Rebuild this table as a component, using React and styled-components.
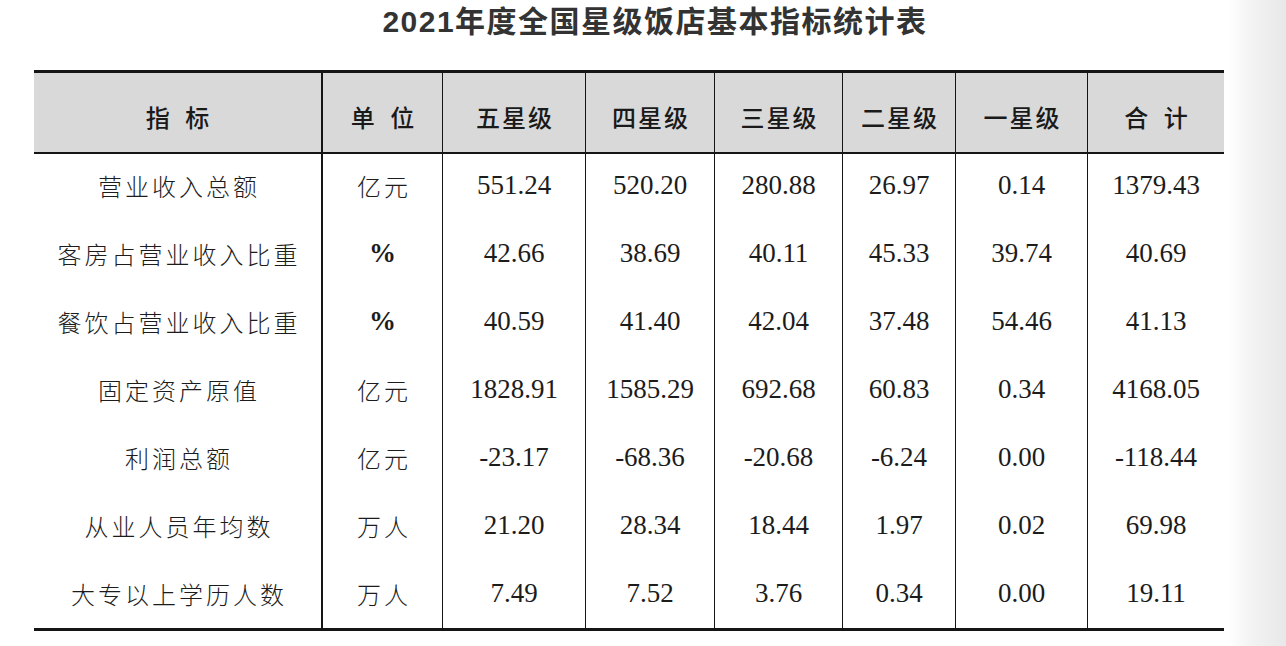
import React from 'react'
import styled, { createGlobalStyle } from 'styled-components'

const GlobalStyle = createGlobalStyle`
  html, body {
    margin: 0;
    padding: 0;
    background: #ffffff;
  }
`

const Screen = styled.div`
  display: flex;
  min-height: 100vh;
`

const Page = styled.div`
  width: 1228px;
  padding: 0 4px 0 34px;
  box-sizing: border-box;
  background: #ffffff;
`

const PageEdge = styled.div`
  flex: 1;
  background: linear-gradient(to right, #ffffff 0%, #f3f3f3 40%, #e8e8e8 100%);
`

const Title = styled.h1`
  margin: 0;
  padding: 7px 0 0 52px;
  height: 70px;
  box-sizing: border-box;
  text-align: center;
  font-family: "Liberation Sans", "Noto Sans CJK SC", sans-serif;
  font-size: 30px;
  line-height: 30px;
  font-weight: 700;
  letter-spacing: 1.5px;
  color: #333333;
`

const Table = styled.table`
  width: 1190px;
  table-layout: fixed;
  border-collapse: separate;
  border-spacing: 0;
`

const line = p => (p.$first ? 'none' : p.$thick ? '2px solid #151515' : '1px solid #151515')

const HeadCell = styled.th`
  height: 71px;
  padding: 8px 0 0;
  background: #d9d9d9;
  border-top: 3px solid #151515;
  border-bottom: 2px solid #151515;
  border-left: ${line};
  font-family: "Noto Sans CJK SC", sans-serif;
  font-size: 24px;
  font-weight: 500;
  letter-spacing: 2px;
  word-spacing: 6px;
  text-indent: 2px;
  color: #1a1a1a;
  text-align: center;
  vertical-align: middle;
`

const Cell = styled.td`
  height: 62px;
  padding: 0 0 ${p => (p.$last ? '4px' : '6px')};
  border-left: ${line};
  border-bottom: ${p => (p.$last ? '3px solid #151515' : 'none')};
  text-align: center;
  vertical-align: middle;
  color: #1c1c1c;
  font-family: ${p => (p.$cjk ? '"Noto Sans CJK SC", sans-serif' : '"Liberation Serif", serif')};
  font-size: ${p => (p.$cjk ? '24px' : '27px')};
  font-weight: ${p => (p.$cjk ? 300 : p.$bold ? 700 : 400)};
  letter-spacing: ${p => (p.$cjk ? '3px' : '0')};
  text-indent: ${p => (p.$cjk ? '3px' : '0')};
  white-space: nowrap;
`

const widths = [287, 121, 143, 129, 128, 113, 132, 137]

const headers = ['指 标', '单 位', '五星级', '四星级', '三星级', '二星级', '一星级', '合 计']

const rows = [
  ['营业收入总额', '亿元', '551.24', '520.20', '280.88', '26.97', '0.14', '1379.43'],
  ['客房占营业收入比重', '%', '42.66', '38.69', '40.11', '45.33', '39.74', '40.69'],
  ['餐饮占营业收入比重', '%', '40.59', '41.40', '42.04', '37.48', '54.46', '41.13'],
  ['固定资产原值', '亿元', '1828.91', '1585.29', '692.68', '60.83', '0.34', '4168.05'],
  ['利润总额', '亿元', '-23.17', '-68.36', '-20.68', '-6.24', '0.00', '-118.44'],
  ['从业人员年均数', '万人', '21.20', '28.34', '18.44', '1.97', '0.02', '69.98'],
  ['大专以上学历人数', '万人', '7.49', '7.52', '3.76', '0.34', '0.00', '19.11'],
]

const isCjk = s => /[\u4e00-\u9fff]/.test(s)

export default function App() {
  return (
    <Screen>
      <GlobalStyle />
      <Page>
        <Title>2021年度全国星级饭店基本指标统计表</Title>
        <Table>
          <colgroup>
            {widths.map((w, i) => (
              <col key={i} style={{ width: w }} />
            ))}
          </colgroup>
          <thead>
            <tr>
              {headers.map((h, i) => (
                <HeadCell key={h} $first={i === 0} $thick={i === 1}>
                  {h}
                </HeadCell>
              ))}
            </tr>
          </thead>
          <tbody>
            {rows.map((r, ri) => (
              <tr key={r[0]}>
                {r.map((v, ci) => (
                  <Cell
                    key={ci}
                    $first={ci === 0}
                    $thick={ci === 1}
                    $last={ri === rows.length - 1}
                    $cjk={isCjk(v)}
                    $bold={v === '%'}
                  >
                    {v}
                  </Cell>
                ))}
              </tr>
            ))}
          </tbody>
        </Table>
      </Page>
      <PageEdge />
    </Screen>
  )
}
